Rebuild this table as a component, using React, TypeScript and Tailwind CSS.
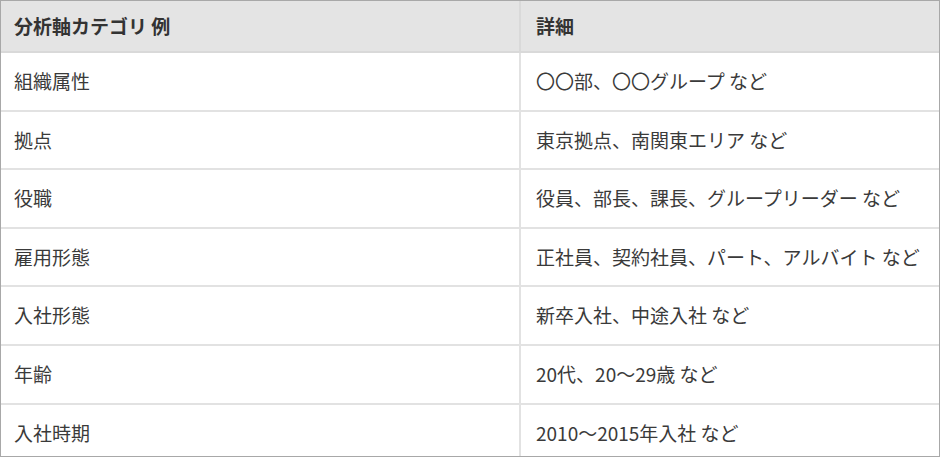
const rows: [string, string][] = [
  ["組織属性", "〇〇部、〇〇グループ など"],
  ["拠点", "東京拠点、南関東エリア など"],
  ["役職", "役員、部長、課長、グループリーダー など"],
  ["雇用形態", "正社員、契約社員、パート、アルバイト など"],
  ["入社形態", "新卒入社、中途入社 など"],
  ["年齢", "20代、20〜29歳 など"],
  ["入社時期", "2010〜2015年入社 など"],
];

export default function App() {
  return (
    <div
      className="w-[940px] h-[457px] overflow-hidden bg-white border border-[#a8a8a8] text-[#3a3a3a] text-[19px]"
      style={{ fontFamily: '"Noto Sans CJK JP", "Noto Sans", sans-serif' }}
    >
      <div className="grid grid-cols-[520px_1fr] h-[52px] bg-[#e4e4e4] border-b-2 border-[#d9d9d9] font-bold text-[#333]">
        <div className="flex items-center px-[13px] border-r-2 border-[#d9d9d9]">分析軸カテゴリ 例</div>
        <div className="flex items-center px-[15px]">詳細</div>
      </div>
      {rows.map(([cat, detail]) => (
        <div key={cat} className="grid grid-cols-[520px_1fr] h-[58.6px] border-b-2 border-[#e2e2e2]">
          <div className="flex items-center px-[13px] border-r-2 border-[#e2e2e2]">{cat}</div>
          <div className="flex items-center px-[15px] whitespace-nowrap">{detail}</div>
        </div>
      ))}
    </div>
  );
}
